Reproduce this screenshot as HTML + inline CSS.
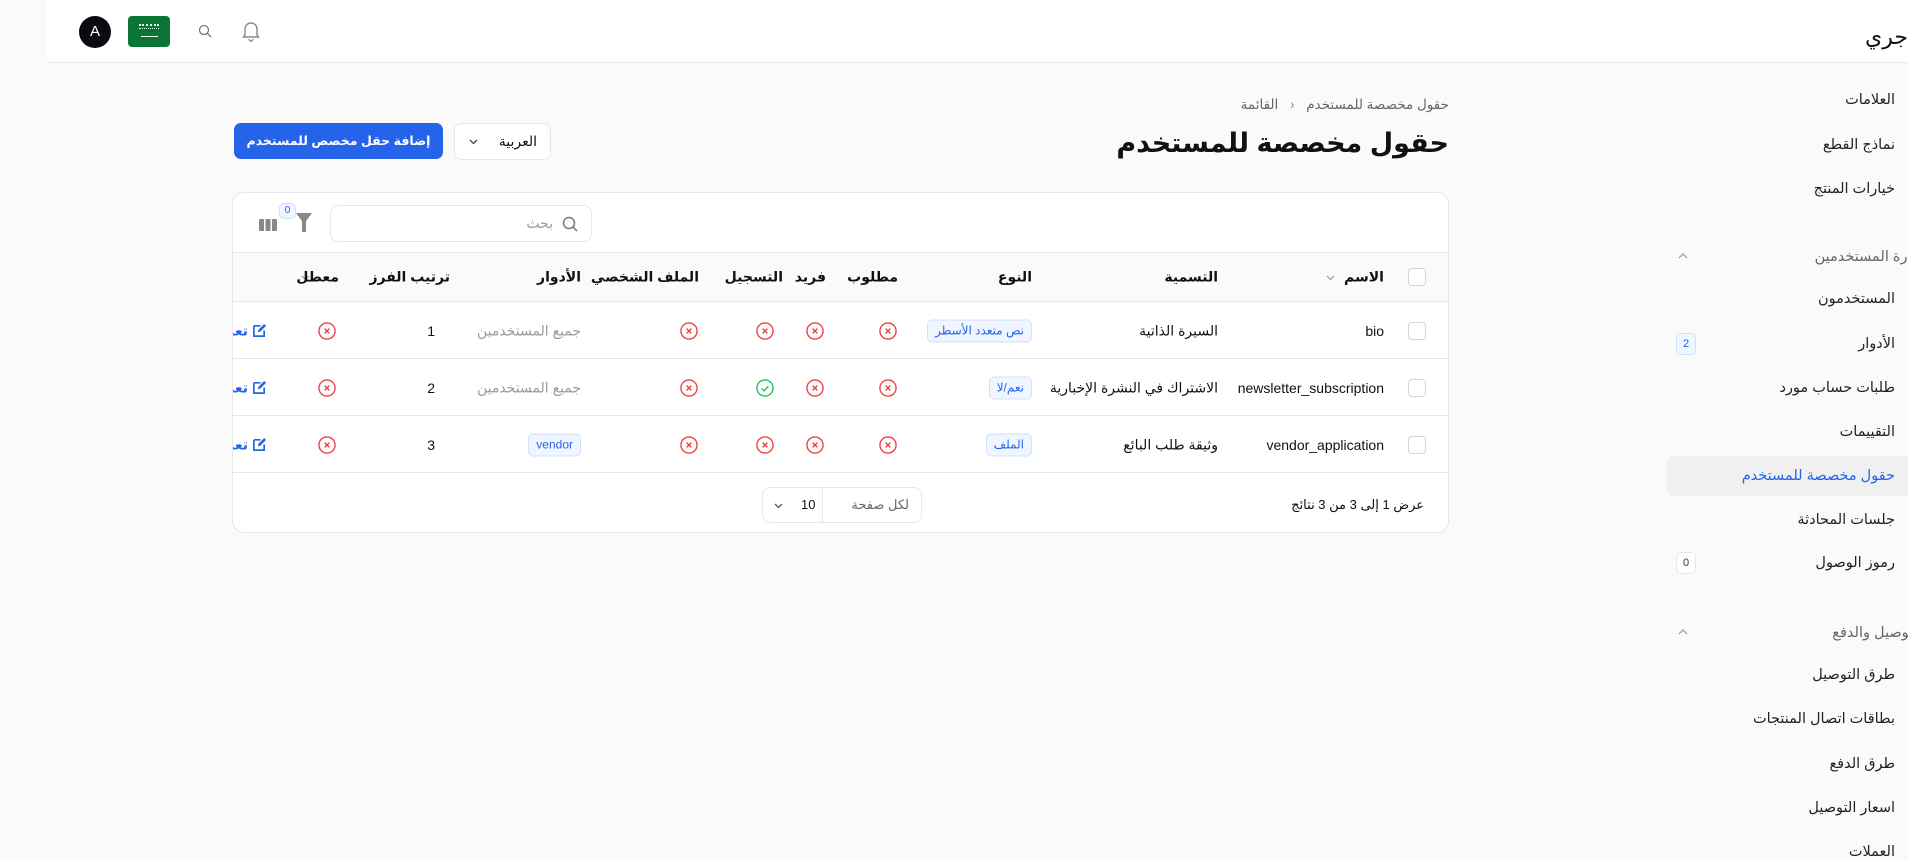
<!DOCTYPE html>
<html><head><meta charset="utf-8">
<style>
*{box-sizing:border-box;margin:0;padding:0}
body{width:1908px;height:860px;overflow:hidden;background:#fafafa;font-family:"Liberation Sans","DejaVu Sans",sans-serif;color:#111;position:relative;font-size:14px}
.a{position:absolute;white-space:nowrap}
.r{direction:rtl}
.top{position:absolute;left:47px;top:0;width:1861px;height:63px;background:#fff;border-bottom:1px solid #e5e7eb}
.side{position:absolute;right:13px;direction:rtl;font-size:14.5px;color:#222;transform:translateY(-50%)}
.sec{position:absolute;right:-14px;direction:rtl;font-size:14.5px;color:#666;transform:translateY(-50%)}
.badge{position:absolute;left:1676px;width:20px;height:22px;border:1px solid #e5e7eb;border-radius:5px;font-size:11px;text-align:center;line-height:20px;transform:translateY(-50%)}
.card{position:absolute;left:232px;top:192px;width:1217px;height:341px;background:#fff;border:1px solid #e5e7eb;border-radius:12px;overflow:hidden}
.th{position:absolute;font-weight:bold;font-size:14px;direction:rtl;transform:translateY(-50%)}
.td{position:absolute;font-size:14px;direction:rtl;transform:translateY(-50%)}
.cb{position:absolute;width:18px;height:18px;border:1px solid #d1d5db;border-radius:4px;background:#fff}
.tag{position:absolute;font-size:12px;color:#2563eb;background:#eff6ff;border:1px solid #cfe0fb;border-radius:5px;padding:0 7px;height:23px;line-height:21px;direction:rtl;transform:translateY(-50%)}
.ic{position:absolute;width:19px;height:19px;transform:translate(-50%,-50%)}
</style></head><body>
<div class="top"></div>
<div class="a" style="left:79px;top:16px;width:32px;height:32px;border-radius:50%;background:#0b0b0f;color:#fff;font-size:15px;text-align:center;line-height:32px">A</div>
<div class="a" style="left:128px;top:16px;width:42px;height:31px;border-radius:4px;background:#0b7535">
 <div style="position:absolute;left:11px;top:8px;width:20px;height:5px;border-top:2px dotted #dfe;border-bottom:1px dotted #dfe"></div>
 <div style="position:absolute;left:13px;top:20px;width:17px;height:1px;background:#fff"></div></div>
<svg class="a" style="left:197px;top:23px" width="16" height="16" viewBox="0 0 16 16" fill="none" stroke="#777" stroke-width="1.3"><circle cx="7" cy="7" r="4.5"/><path d="M10.5 10.5L14 14"/></svg>
<svg class="a" style="left:241px;top:20px" width="20" height="22" viewBox="0 0 20 22" fill="none" stroke="#888" stroke-width="1.4"><path d="M4 15V9a6 6 0 0 1 12 0v6l1.5 2h-15z"/><path d="M8 19a2 2 0 0 0 4 0"/></svg>
<div class="a r" style="right:0;top:24px;font-size:22px;line-height:26px">جري</div>

<div class="side" style="top:100px">العلامات</div>
<div class="side" style="top:145px">نماذج القطع</div>
<div class="side" style="top:189px">خيارات المنتج</div>
<div class="sec" style="top:257px">إدارة المستخدمين</div>
<svg class="a" style="left:1677px;top:251px" width="12" height="10" viewBox="0 0 12 10" fill="none" stroke="#999" stroke-width="1.2"><path d="M2 7l4-4 4 4"/></svg>
<div class="side" style="top:299px">المستخدمون</div>
<div class="side" style="top:344px">الأدوار</div>
<div class="badge" style="top:344px;color:#2563eb;background:#eff6ff;border-color:#cfe0fb">2</div>
<div class="side" style="top:388px">طلبات حساب مورد</div>
<div class="side" style="top:432px">التقييمات</div>
<div class="a" style="left:1666px;top:456px;width:250px;height:40px;background:#f0f0f0;border-radius:8px"></div>
<div class="side" style="top:476px;color:#2563eb">حقول مخصصة للمستخدم</div>
<div class="side" style="top:520px">جلسات المحادثة</div>
<div class="side" style="top:563px">رموز الوصول</div>
<div class="badge" style="top:563px;color:#333;background:#fff">0</div>
<div class="sec" style="top:633px">التوصيل والدفع</div>
<svg class="a" style="left:1677px;top:627px" width="12" height="10" viewBox="0 0 12 10" fill="none" stroke="#999" stroke-width="1.2"><path d="M2 7l4-4 4 4"/></svg>
<div class="side" style="top:675px">طرق التوصيل</div>
<div class="side" style="top:719px">بطاقات اتصال المنتجات</div>
<div class="side" style="top:764px">طرق الدفع</div>
<div class="side" style="top:808px">اسعار التوصيل</div>
<div class="side" style="top:852px">العملات</div>

<div class="a r" style="right:459px;top:97px;font-size:13.5px;color:#666">حقول مخصصة للمستخدم <span style="margin:0 8px;color:#888">&lsaquo;</span> القائمة</div>
<div class="a r" style="right:459px;top:125px;font-size:27px;font-weight:bold;line-height:36px">حقول مخصصة للمستخدم</div>
<div class="a r" style="left:234px;top:123px;width:209px;height:36px;background:#2563eb;color:#fff;border-radius:7px;font-size:12.5px;font-weight:bold;text-align:center;line-height:36px">إضافة حقل مخصص للمستخدم</div>
<div class="a" style="left:454px;top:123px;width:97px;height:37px;background:#fff;border:1px solid #e5e7eb;border-radius:7px">
 <span style="position:absolute;right:13px;top:9px;font-size:14px;direction:rtl">العربية</span>
 <svg style="position:absolute;left:13px;top:13px" width="11" height="9" viewBox="0 0 11 9" fill="none" stroke="#444" stroke-width="1.3"><path d="M2 3l3.5 3.5L9 3"/></svg></div>

<div class="card">
 <div class="a" style="left:97px;top:12px;width:262px;height:37px;border:1px solid #e5e7eb;border-radius:8px">
  <svg style="position:absolute;right:12px;top:9px" width="18" height="18" viewBox="0 0 18 18" fill="none" stroke="#777" stroke-width="1.5"><circle cx="8" cy="8" r="5.5"/><path d="M12 12l4 4"/></svg>
  <span style="position:absolute;right:38px;top:9px;color:#999;font-size:14px;direction:rtl">بحث</span></div>
 <svg class="a" style="left:63px;top:20px" width="16" height="19" viewBox="0 0 16 19"><path d="M0 0h16l-6 8v11h-4V8z" fill="#888"/></svg>
 <div class="a" style="left:46px;top:10px;width:17px;height:16px;background:#eff6ff;border:1px solid #cfe0fb;border-radius:5px;color:#2563eb;font-size:10px;text-align:center;line-height:14px">0</div>
 <svg class="a" style="left:26px;top:26px" width="18" height="12" viewBox="0 0 18 12" fill="#888"><rect x="0" y="0" width="5" height="12" rx="1"/><rect x="6.5" y="0" width="5" height="12"/><rect x="13" y="0" width="5" height="12" rx="1"/></svg>

 <div class="a" style="left:0;top:59px;width:1217px;height:50px;background:#fafafa;border-top:1px solid #e5e7eb;border-bottom:1px solid #e5e7eb"></div>
 <div class="a" style="left:0;top:165px;width:1217px;height:1px;background:#e5e7eb"></div>
 <div class="a" style="left:0;top:222px;width:1217px;height:1px;background:#e5e7eb"></div>
 <div class="a" style="left:0;top:279px;width:1217px;height:1px;background:#e5e7eb"></div>

 <div class="cb" style="left:1175px;top:75px"></div>
 <div class="th" style="right:64px;top:84px">الاسم</div>
 <svg class="a" style="left:1092px;top:80px" width="11" height="9" viewBox="0 0 11 9" fill="none" stroke="#999" stroke-width="1.2"><path d="M2 3l3.5 3.5L9 3"/></svg>
 <div class="th" style="right:230px;top:84px">التسمية</div>
 <div class="th" style="right:416px;top:84px">النوع</div>
 <div class="th" style="right:550px;top:84px">مطلوب</div>
 <div class="th" style="right:622px;top:84px">فريد</div>
 <div class="th" style="right:665px;top:84px">التسجيل</div>
 <div class="th" style="right:749px;top:84px">الملف الشخصي</div>
 <div class="th" style="right:867px;top:84px">الأدوار</div>
 <div class="th" style="right:998px;top:84px">ترتيب الفرز</div>
 <svg class="a" style="left:67px;top:80px" width="11" height="9" viewBox="0 0 11 9" fill="none" stroke="#999" stroke-width="1.2"><path d="M2 3l3.5 3.5L9 3"/></svg>
 <div class="th" style="right:1109px;top:84px">معطل</div>

 <div class="cb" style="left:1175px;top:129px"></div>
 <div class="td" style="right:64px;top:138px">bio</div>
 <div class="td" style="right:230px;top:138px">السيرة الذاتية</div>
 <div class="tag" style="right:416px;top:138px">نص متعدد الأسطر</div>
 <div class="td" style="right:867px;top:138px;color:#999">جميع المستخدمين</div>
 <div class="td" style="right:1013px;top:138px">1</div>

 <div class="cb" style="left:1175px;top:186px"></div>
 <div class="td" style="right:64px;top:195px">newsletter_subscription</div>
 <div class="td" style="right:230px;top:195px">الاشتراك في النشرة الإخبارية</div>
 <div class="tag" style="right:416px;top:195px">نعم/لا</div>
 <div class="td" style="right:867px;top:195px;color:#999">جميع المستخدمين</div>
 <div class="td" style="right:1013px;top:195px">2</div>

 <div class="cb" style="left:1175px;top:243px"></div>
 <div class="td" style="right:64px;top:252px">vendor_application</div>
 <div class="td" style="right:230px;top:252px">وثيقة طلب البائع</div>
 <div class="tag" style="right:416px;top:252px">الملف</div>
 <div class="tag" style="right:867px;top:252px">vendor</div>
 <div class="td" style="right:1013px;top:252px">3</div>

 <svg width="0" height="0" style="position:absolute"><defs>
  <symbol id="x" viewBox="0 0 20 20"><circle cx="10" cy="10" r="8.5" fill="none" stroke="#ef4444" stroke-width="1.5"/><path d="M7.5 7.5l5 5M12.5 7.5l-5 5" stroke="#ef4444" stroke-width="1.5"/></symbol>
  <symbol id="ok" viewBox="0 0 20 20"><circle cx="10" cy="10" r="8.5" fill="none" stroke="#22c55e" stroke-width="1.5"/><path d="M6.5 10.5l2.5 2.5 4.5-5" fill="none" stroke="#22c55e" stroke-width="1.5"/></symbol>
  <symbol id="ed" viewBox="0 0 16 16"><path d="M2 3h7M2 3v11h11V8" fill="none" stroke="#2563eb" stroke-width="1.8"/><path d="M6 10l1-3 6-6 2 2-6 6z" fill="#2563eb"/></symbol>
 </defs></svg>
 <svg class="ic" style="left:655px;top:138px"><use href="#x"/></svg>
 <svg class="ic" style="left:582px;top:138px"><use href="#x"/></svg>
 <svg class="ic" style="left:532px;top:138px"><use href="#x"/></svg>
 <svg class="ic" style="left:456px;top:138px"><use href="#x"/></svg>
 <svg class="ic" style="left:94px;top:138px"><use href="#x"/></svg>
 <svg class="ic" style="left:655px;top:195px"><use href="#x"/></svg>
 <svg class="ic" style="left:582px;top:195px"><use href="#x"/></svg>
 <svg class="ic" style="left:532px;top:195px"><use href="#ok"/></svg>
 <svg class="ic" style="left:456px;top:195px"><use href="#x"/></svg>
 <svg class="ic" style="left:94px;top:195px"><use href="#x"/></svg>
 <svg class="ic" style="left:655px;top:252px"><use href="#x"/></svg>
 <svg class="ic" style="left:582px;top:252px"><use href="#x"/></svg>
 <svg class="ic" style="left:532px;top:252px"><use href="#x"/></svg>
 <svg class="ic" style="left:456px;top:252px"><use href="#x"/></svg>
 <svg class="ic" style="left:94px;top:252px"><use href="#x"/></svg>
 <svg class="a" style="left:19px;top:130px" width="15" height="15"><use href="#ed"/></svg>
 <svg class="a" style="left:19px;top:187px" width="15" height="15"><use href="#ed"/></svg>
 <svg class="a" style="left:19px;top:244px" width="15" height="15"><use href="#ed"/></svg>
 <div class="td" style="right:1200px;top:138px;color:#2563eb;font-weight:bold">تعديل</div>
 <div class="td" style="right:1200px;top:195px;color:#2563eb;font-weight:bold">تعديل</div>
 <div class="td" style="right:1200px;top:252px;color:#2563eb;font-weight:bold">تعديل</div>

 <div class="td" style="right:24px;top:312px;font-size:13px">عرض 1 إلى 3 من 3 نتائج</div>
 <div class="a" style="left:529px;top:294px;width:160px;height:36px;border:1px solid #e5e7eb;border-radius:8px">
  <span style="position:absolute;right:12px;top:9px;direction:rtl;color:#666;font-size:13px">لكل صفحة</span>
  <div style="position:absolute;left:59px;top:0;width:1px;height:34px;background:#e5e7eb"></div>
  <span style="position:absolute;left:38px;top:9px;font-size:13px">10</span>
  <svg style="position:absolute;left:10px;top:13px" width="11" height="9" viewBox="0 0 11 9" fill="none" stroke="#555" stroke-width="1.3"><path d="M2 3l3.5 3.5L9 3"/></svg></div>
</div>
</body></html>
